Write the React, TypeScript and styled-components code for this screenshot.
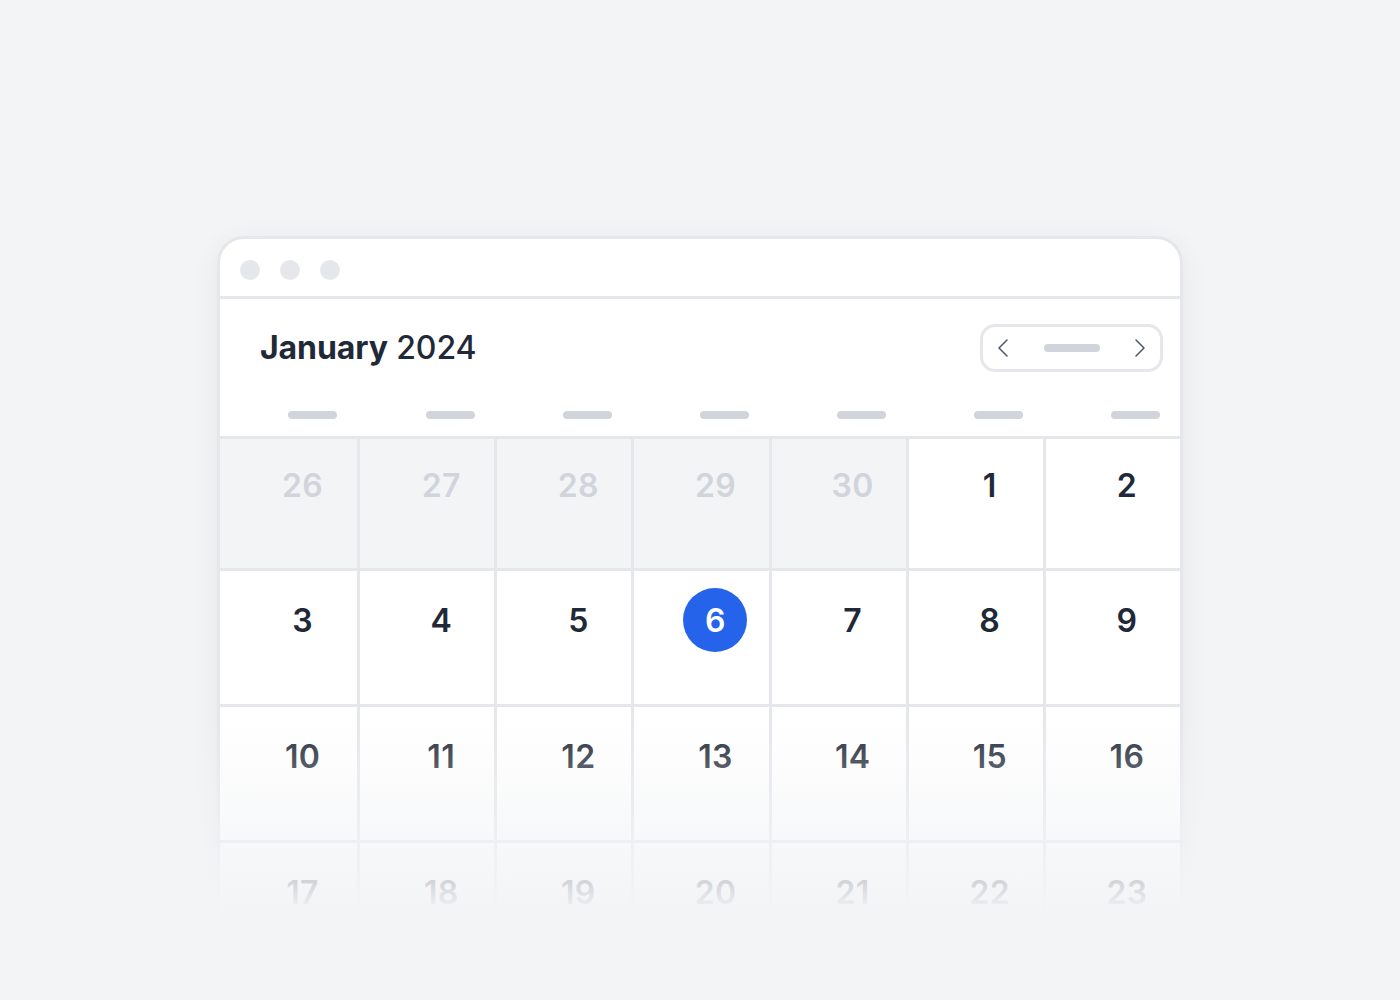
import styled, { createGlobalStyle } from "styled-components";

const GlobalStyle = createGlobalStyle`
  html, body {
    margin: 0;
    padding: 0;
    background: #f3f4f6;
  }
  body {
    font-family: Inter, "Noto Sans", "Liberation Sans", sans-serif;
  }
`;

const Page = styled.div`
  min-height: 1000px;
  display: flex;
  justify-content: center;
  padding-top: 236px;
  box-sizing: border-box;
  overflow: hidden;
`;

const Frame = styled.div`
  position: relative;
  width: 966px;
`;

const Window = styled.div`
  box-sizing: border-box;
  width: 100%;
  background: #ffffff;
  border: 3px solid #e5e7eb;
  border-radius: 27px 27px 0 0;
  overflow: hidden;
  box-shadow: 0 6px 28px rgba(17, 24, 39, 0.06);
`;

const TitleBar = styled.div`
  height: 60px;
  box-sizing: border-box;
  padding: 5px 0 0 20px;
  display: flex;
  align-items: center;
  gap: 20px;
  border-bottom: 3px solid #e5e7eb;
`;

const Dot = styled.span`
  width: 20px;
  height: 20px;
  border-radius: 50%;
  background: #e5e7eb;
`;

const CalendarHeader = styled.div`
  display: flex;
  align-items: center;
  justify-content: space-between;
  padding: 25px 17px 0 40px;
`;

const MonthTitle = styled.h1`
  margin: 0;
  font-size: 32px;
  line-height: 40px;
  font-weight: 500;
  color: #1f2937;
  letter-spacing: -0.1px;

  strong {
    font-weight: 700;
  }
`;

const NavGroup = styled.div`
  box-sizing: border-box;
  width: 183px;
  height: 48px;
  border: 3px solid #e5e7eb;
  border-radius: 15px;
  display: flex;
  align-items: center;
  justify-content: space-between;
  padding: 0 14px;
  color: #4b5563;
`;

const Pill = styled.span<{ $width: number }>`
  display: block;
  width: ${(p) => p.$width}px;
  height: 8px;
  border-radius: 4px;
  background: #d1d5db;
`;

const WeekRow = styled.div`
  display: grid;
  grid-template-columns: repeat(7, 1fr);
  height: 64px;
  align-items: end;
  padding-bottom: 17px;
  box-sizing: border-box;
`;

const WeekCell = styled.div`
  display: flex;
  justify-content: center;
  padding-left: 46px;
  border-left: 3px solid transparent;

  &:first-child {
    border-left: none;
    padding-left: 48px;
  }
`;

const DayGrid = styled.div`
  display: grid;
  grid-template-columns: repeat(7, 1fr);
`;

const DayCell = styled.div<{ $outside?: boolean }>`
  height: 136px;
  box-sizing: border-box;
  border-top: 3px solid #e5e7eb;
  border-left: 3px solid #e5e7eb;
  background: ${(p) => (p.$outside ? "#f3f4f6" : "#ffffff")};
  display: flex;
  justify-content: center;
  align-items: flex-start;
  padding: 17px 0 0 28px;

  &:nth-child(7n + 1) {
    border-left: none;
  }

  &:nth-child(-n + 7) {
    height: 132px;
    padding-top: 14px;
  }
`;

const DayNumber = styled.span<{ $outside?: boolean; $today?: boolean }>`
  width: 64px;
  height: 64px;
  border-radius: 50%;
  display: flex;
  align-items: center;
  justify-content: center;
  font-size: 32px;
  font-weight: 600;
  letter-spacing: 0.3px;
  background: ${(p) => (p.$today ? "#2563eb" : "transparent")};
  color: ${(p) => (p.$today ? "#ffffff" : p.$outside ? "#d1d5db" : "#1f2937")};
`;

const FadeOut = styled.div`
  position: absolute;
  left: -60px;
  right: -60px;
  top: 480px;
  bottom: -40px;
  pointer-events: none;
  background: linear-gradient(
    to bottom,
    rgba(243, 244, 246, 0) 0px,
    rgba(243, 244, 246, 1) 196px
  );
`;

function Chevron({ dir }: { dir: "left" | "right" }) {
  return (
    <svg width="12" height="20" viewBox="0 0 12 20" fill="none">
      <path
        d={dir === "left" ? "M10 2 L2 10 L10 18" : "M2 2 L10 10 L2 18"}
        stroke="currentColor"
        strokeWidth="1.5"
        strokeLinecap="round"
        strokeLinejoin="round"
      />
    </svg>
  );
}

type Day = { n: number; outside?: boolean };

const days: Day[] = [
  ...[26, 27, 28, 29, 30].map((n) => ({ n, outside: true })),
  ...Array.from({ length: 23 }, (_, i) => ({ n: i + 1 })),
];

export default function App() {
  return (
    <>
      <GlobalStyle />
      <Page>
        <Frame>
          <Window>
            <TitleBar>
              <Dot />
              <Dot />
              <Dot />
            </TitleBar>

            <CalendarHeader>
              <MonthTitle>
                <strong>January</strong> 2024
              </MonthTitle>
              <NavGroup>
                <Chevron dir="left" />
                <Pill $width={56} />
                <Chevron dir="right" />
              </NavGroup>
            </CalendarHeader>

            <WeekRow>
              {Array.from({ length: 7 }, (_, i) => (
                <WeekCell key={i}>
                  <Pill $width={49} />
                </WeekCell>
              ))}
            </WeekRow>

            <DayGrid>
              {days.map((d, i) => (
                <DayCell key={i} $outside={d.outside}>
                  <DayNumber $outside={d.outside} $today={!d.outside && d.n === 6}>
                    {d.n}
                  </DayNumber>
                </DayCell>
              ))}
            </DayGrid>
          </Window>
          <FadeOut />
        </Frame>
      </Page>
    </>
  );
}
